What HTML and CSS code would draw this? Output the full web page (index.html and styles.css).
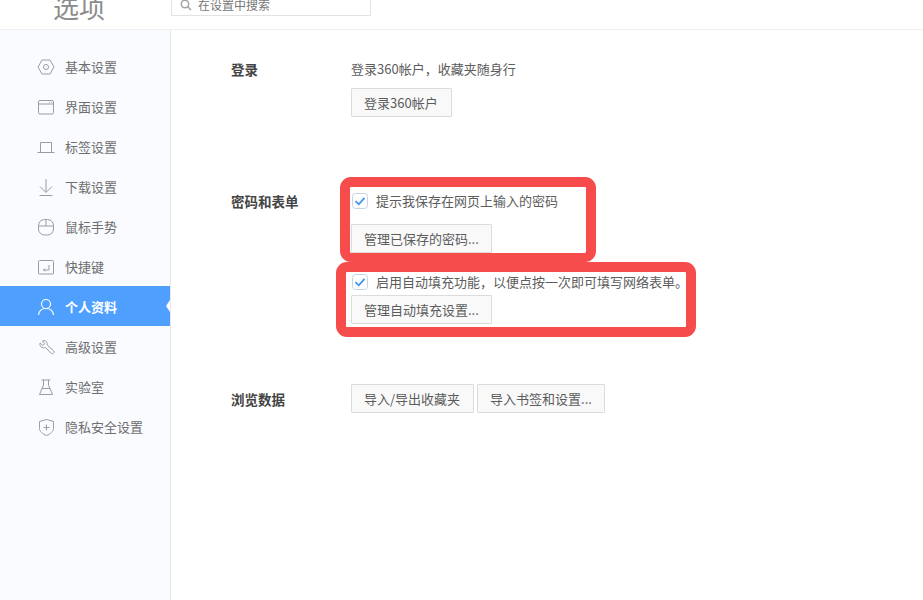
FILE: index.html
```html
<!DOCTYPE html>
<html lang="zh-CN">
<head>
<meta charset="utf-8">
<title>选项</title>
<link rel="stylesheet" href="styles.css">
</head>
<body>
<header class="header">
  <div class="title">选项</div>
  <div class="search">
    <svg class="search-icon" viewBox="0 0 14 14"><circle cx="6" cy="6" r="3.7"/><path d="M8.800 8.800 12 12"/></svg>
    <span>在设置中搜索</span>
  </div>
</header>
<div class="layout">
  <nav class="nav">
    <a class="nav-item"><svg class="nav-icon" viewBox="0 0 20 20"><path d="M6 3h8l4 7-4 7H6l-4-7z"/><circle cx="10" cy="10" r="2.500"/></svg>基本设置</a>
    <a class="nav-item"><svg class="nav-icon" viewBox="0 0 20 20"><rect x="2.500" y="3.500" width="15" height="13.500" rx="1.500"/><path d="M2.500 7h15M13 5.300h.8M15 5.300h.8"/></svg>界面设置</a>
    <a class="nav-item"><svg class="nav-icon" viewBox="0 0 20 20"><path d="M4.500 15.500V5.500h11v10M1.500 15.500h17"/></svg>标签设置</a>
    <a class="nav-item"><svg class="nav-icon" viewBox="0 0 20 20"><path d="M10 2v13M4 9.500l6 6 6-6M3.500 18.500h13"/></svg>下载设置</a>
    <a class="nav-item"><svg class="nav-icon" viewBox="0 0 20 20"><rect x="2.500" y="2.500" width="15" height="15.500" rx="6"/><path d="M2.500 9h15M10 2.500V9"/></svg>鼠标手势</a>
    <a class="nav-item"><svg class="nav-icon" viewBox="0 0 20 20"><rect x="2.500" y="3.500" width="15" height="13.500" rx="1"/><path d="M13 8v5H7.500M9 11.500l-1.500 1.500 1.500 1.500"/></svg>快捷键</a>
    <a class="nav-item active"><svg class="nav-icon" viewBox="0 0 20 20"><circle cx="10" cy="7" r="4.500"/><path d="M2.500 18c.5-4 3.500-6.500 7.500-6.500s7 2.500 7.500 6.500"/></svg>个人资料</a>
    <a class="nav-item"><svg class="nav-icon" viewBox="0 0 20 20"><path d="M4 6 6.800 8.500 8.800 6.700 6.300 4C8.300 3 10.800 4 11.300 6.500c.1.700 0 1.200 0 1.500l6.500 6c.8 1 .3 1.700-.3 2.300-.7.600-1.500.7-2.200 0l-6-5.800C6.800 11.300 3.300 10.300 4 6z"/></svg>高级设置</a>
    <a class="nav-item"><svg class="nav-icon" viewBox="0 0 20 20"><path d="M5.500 3h9M7.500 3v5L3.500 17.500h13L12.500 8V3M6 11.500h8"/></svg>实验室</a>
    <a class="nav-item"><svg class="nav-icon" viewBox="0 0 20 20"><path d="M3.500 4.500 10.500 2.500l7 2v7c0 3-3 5.500-7 7-4-1.500-7-4-7-7z"/><path d="M10.500 7.500v6M7.500 10.500h6"/></svg>隐私安全设置</a>
  </nav>
  <main class="main">
    <section class="row">
      <h2 class="row-label">登录</h2>
      <div class="row-body">
        <p class="line login-line">登录360帐户，收藏夹随身行</p>
        <button class="btn btn-wide">登录360帐户</button>
      </div>
    </section>
    <section class="row row-password">
      <h2 class="row-label">密码和表单</h2>
      <div class="row-body">
        <div class="group group-first">
          <label class="line check-line check-line-first"><svg class="check" viewBox="0 0 16 16"><rect x=".5" y=".5" width="15" height="15" rx="3"/><path d="M3.500 8.200 6.800 11.300 12.500 4.800"/></svg>提示我保存在网页上输入的密码</label>
          <button class="btn">管理已保存的密码...</button>
          <div class="frame frame-first"></div>
        </div>
        <div class="group group-second">
          <label class="line check-line"><svg class="check" viewBox="0 0 16 16"><rect x=".5" y=".5" width="15" height="15" rx="3"/><path d="M3.500 8.200 6.800 11.300 12.500 4.800"/></svg>启用自动填充功能，以便点按一次即可填写网络表单。</label>
          <button class="btn">管理自动填充设置...</button>
          <div class="frame frame-second"></div>
        </div>
      </div>
    </section>
    <section class="row row-data">
      <h2 class="row-label">浏览数据</h2>
      <div class="row-body btn-row">
        <button class="btn btn-wide">导入/导出收藏夹</button>
        <button class="btn">导入书签和设置...</button>
      </div>
    </section>
  </main>
</div>
</body>
</html>
```
FILE: styles.css
```css
* { box-sizing: border-box; }
html, body { height: 100%; }
body {
  margin: 0;
  overflow: hidden;
  background: #fff;
  color: #5c5c5c;
  font: 13px/20px "Noto Sans CJK SC", "Liberation Sans", sans-serif;
}
.header {
  display: flex;
  height: 30px;
  border-bottom: 1px solid #f0f0f0;
  overflow: hidden;
}
.title {
  width: 171px;
  margin-top: -13px;
  padding-left: 53px;
  color: #8c8c8c;
  font-size: 26px;
  line-height: 40px;
}
.search {
  display: flex;
  align-items: center;
  gap: 5px;
  width: 200px;
  height: 16px;
  padding: 0 0 6px 7px;
  border: 1px solid #e3e3e3;
  border-top: 0;
  color: #777;
  font-size: 12px;
  line-height: 12px;
}
.search-icon { flex: none; width: 14px; height: 14px; fill: none; stroke: #a3a3a3; stroke-width: 1.500; }
.layout { display: flex; height: 570px; }
.nav {
  flex: none;
  width: 171px;
  padding-top: 16px;
  background: #f9fbff;
  border-right: 1px solid #e6e8ec;
}
.nav-item {
  position: relative;
  display: flex;
  align-items: center;
  gap: 9px;
  height: 40px;
  padding: 2px 0 0 36px;
  color: #6e6e6e;
}
.nav-icon {
  width: 20px;
  height: 20px;
  fill: none;
  stroke: #989ca5;
  stroke-width: 1;
}
.active { background: #4f9fff; color: #fff; font-weight: 700; }
.active .nav-icon { stroke: #fff; stroke-width: 1.200; }
.active::after {
  content: "";
  position: absolute;
  right: 0;
  top: 14px;
  border: 6px solid transparent;
  border-left-width: 0;
  border-right: 4px solid #fff;
}
.main { flex: 1; padding: 29px 0 0 60px; }
.row { display: flex; }
.row-password { margin-top: 74px; }
.row-data { margin-top: 60px; }
.row-label {
  flex: none;
  width: 120px;
  margin: 0;
  color: #444;
  font-size: 13.500px;
  font-weight: 700;
  line-height: 20px;
}
.row-data .row-label { padding-top: 5px; }
.line { display: block; margin: 0; }
.login-line { margin-bottom: 9px; }
.btn {
  display: block;
  height: 29px;
  padding: 0 12px;
  border: 1px solid #dcdcdc;
  border-radius: 1px;
  background: #f9f9f9;
  color: #5c5c5c;
  font: inherit;
}
.btn-wide { padding-right: 13px; }
.btn-row { display: flex; gap: 3px; }
.group { position: relative; }
.group-second { margin-top: 19px; }
.check-line { display: flex; align-items: center; gap: 8px; padding-left: 1px; margin-bottom: 3px; }
.check-line-first { margin-bottom: 13px; }
.check { flex: none; width: 16px; height: 16px; fill: #fff; stroke: #c6d3e2; }
.check path { fill: none; stroke: #3f94ee; stroke-width: 1.800; }
.frame {
  position: absolute;
  border: 10px solid #f64c4c;
  border-radius: 11px;
  pointer-events: none;
}
.frame-first { left: -11px; top: -14px; width: 256px; height: 85px; border-bottom-width: 9px; }
.frame-second { left: -15px; top: -10px; width: 360px; height: 75px; }
```
